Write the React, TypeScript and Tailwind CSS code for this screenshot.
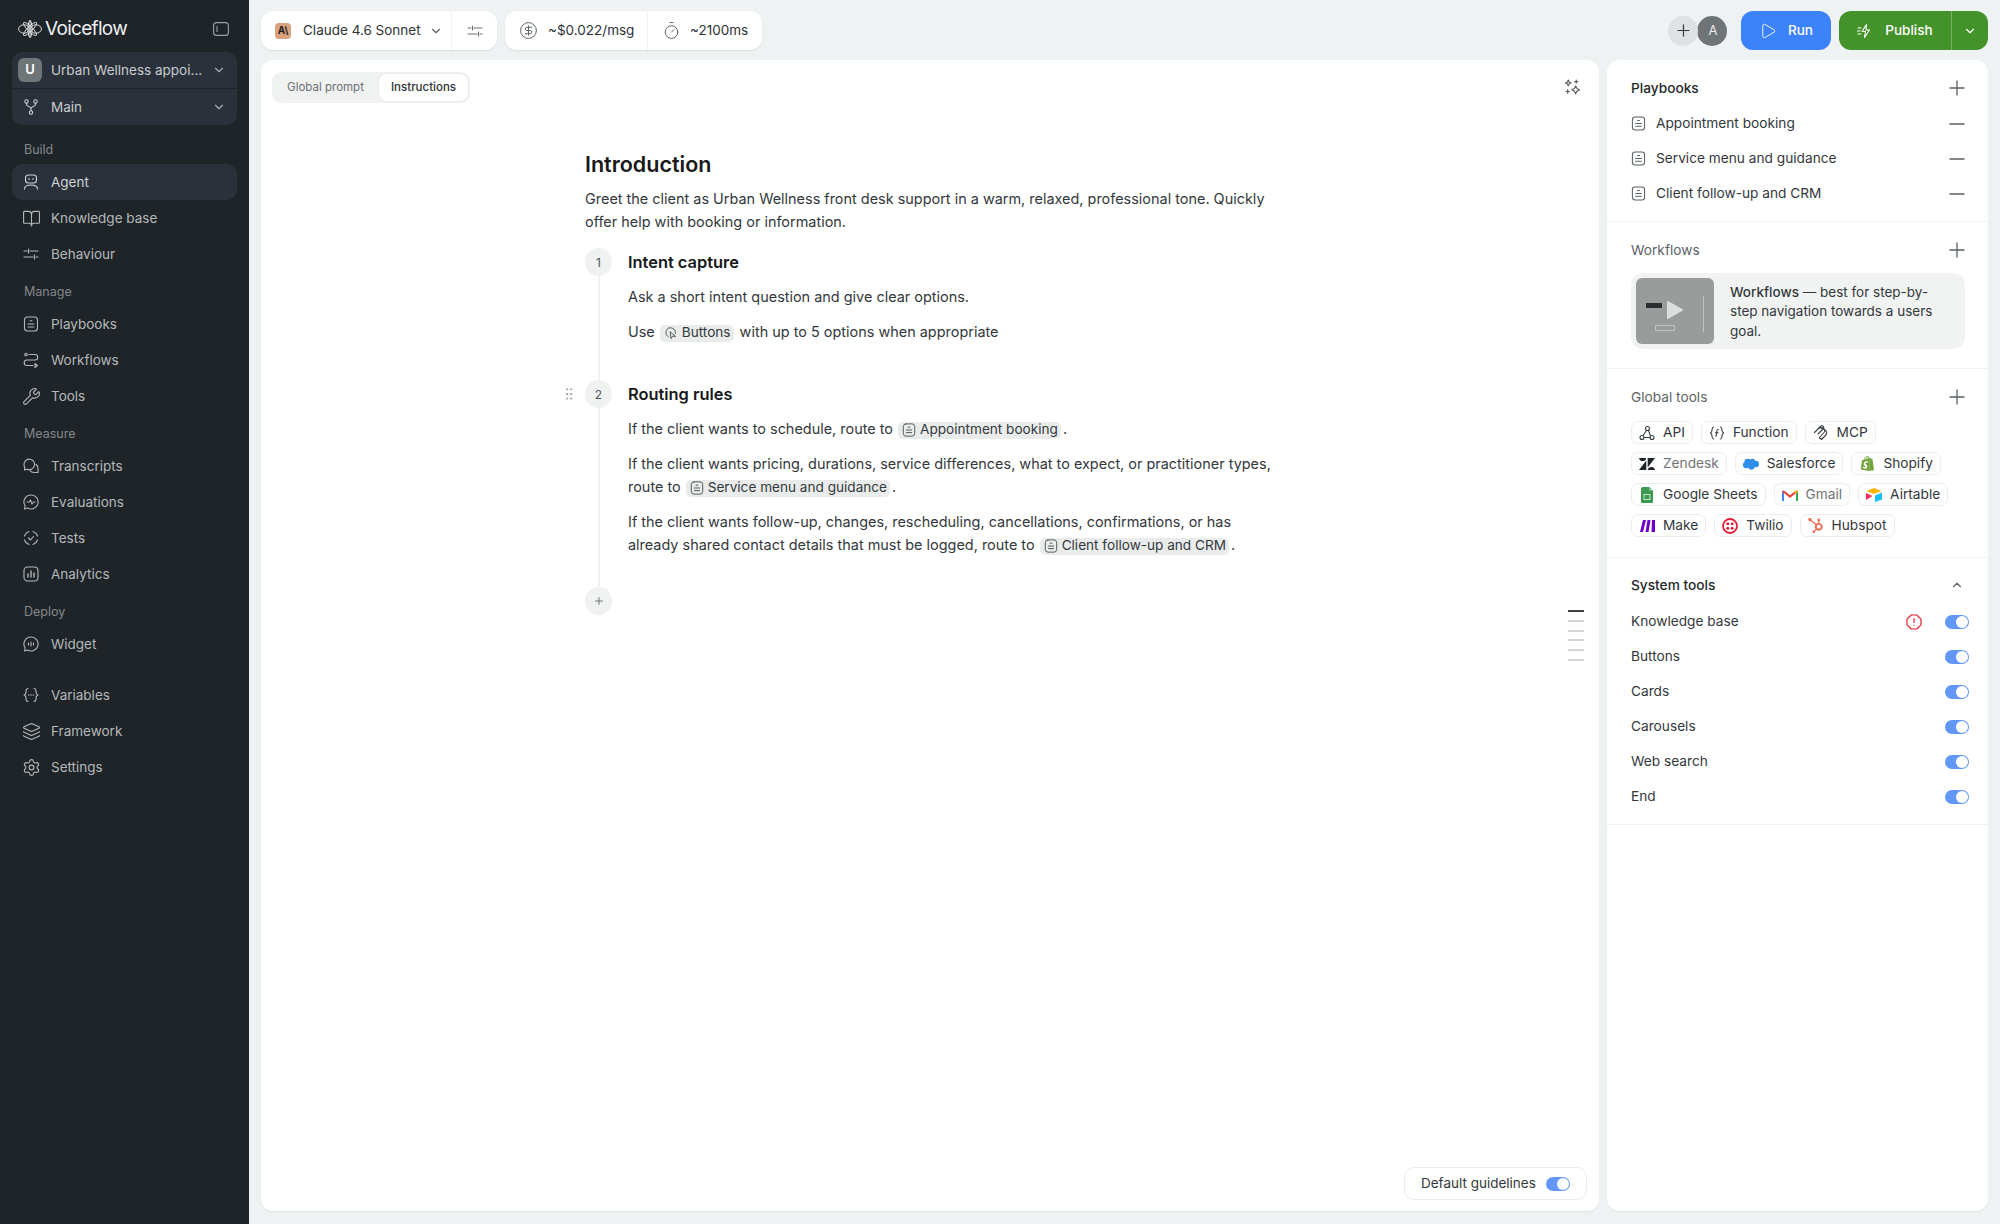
import type { ReactNode } from "react";
import {
  BookOpen,
  ChevronDown,
  ChevronUp,
  Minus,
  Plus,
  Play,
  Wrench,
  Settings,
  Layers,
  CircleDollarSign,
  Timer,
  GripVertical,
} from "lucide-react";
import { SiHubspot, SiShopify } from "react-icons/si";

function Svg({ children, size = 16, className = "" }: { children: ReactNode; size?: number; className?: string }) {
  return (
    <svg width={size} height={size} viewBox="0 0 16 16" fill="none" stroke="currentColor" strokeWidth="1.1" strokeLinecap="round" strokeLinejoin="round" className={`shrink-0 ${className}`}>
      {children}
    </svg>
  );
}

function PlaybookIcon({ size = 16, className = "" }: { size?: number; className?: string }) {
  return (
    <Svg size={size} className={className}>
      <rect x="1.5" y="1" width="13" height="14" rx="3" />
      <path d="M7 4.800h2M5 8h6M5 11h6" />
    </Svg>
  );
}

function SlidersIcon({ size = 16 }: { size?: number }) {
  return (
    <Svg size={size}>
      <path d="M1 5h3M7 5h8M5.500 3v4M1 11h9M13 11h2M11.500 9v4" />
    </Svg>
  );
}

const navIcons: Record<string, ReactNode> = {
  Agent: (
    <Svg>
      <rect x="2.500" y="1" width="11" height="8" rx="3" />
      <path d="M6 4.500v1M10 4.500v1M1.500 15c0-2.800 2.500-4 6.500-4s6.500 1.200 6.500 4" />
    </Svg>
  ),
  "Knowledge base": <BookOpen size={19} strokeWidth={1.4} className="shrink-0" />,
  Behaviour: <SlidersIcon />,
  Playbooks: <PlaybookIcon />,
  Workflows: (
    <Svg>
      <circle cx="3" cy="2.500" r="1.300" />
      <path d="M6 2.500h6a2.700 2.700 0 0 1 0 5.500H4a2.700 2.700 0 0 0 0 5.500h6" />
      <path d="M12 11.500l2.500 2-2.500 2z" />
    </Svg>
  ),
  Tools: <Wrench size={19} strokeWidth={1.4} className="shrink-0" />,
  Transcripts: (
    <Svg>
      <path d="M1 6.500a5.300 5.300 0 1 1 3 4.700L1.500 12 1.800 9.500A5 5 0 0 1 1 6.500z" />
      <path d="M13 6.500c1.500 1 2 2.500 2 4v4h-4c-1.500 0-3-.5-4-2" />
    </Svg>
  ),
  Evaluations: (
    <Svg>
      <path d="M8 1a7 7 0 1 1-3.500 13L1.500 15l.7-3A7 7 0 0 1 8 1z" />
      <path d="M4 8h2l1.500-2 1.500 4L10.500 8H12" />
    </Svg>
  ),
  Tests: (
    <Svg>
      <path d="M1.500 6A7 7 0 0 1 6 1.500M10 1.500A7 7 0 0 1 14.500 6M14.500 10A7 7 0 0 1 10 14.500M6 14.500A7 7 0 0 1 1.500 10" />
      <path d="M5.500 8l2 2 3-3.500" />
    </Svg>
  ),
  Analytics: (
    <Svg>
      <rect x="1" y="1" width="14" height="14" rx="3.500" />
      <path d="M5 8v3M8 5v6M11 7v4" strokeWidth="1.400" />
    </Svg>
  ),
  Widget: (
    <Svg>
      <path d="M8 1a7 7 0 1 1-3.500 13L1.500 15l.7-3A7 7 0 0 1 8 1z" />
      <path d="M5.500 7v2M8 6v4M10.500 7v2" />
    </Svg>
  ),
  Variables: (
    <Svg>
      <path d="M5 1.500C3 1.500 3 3 3 4.500S3 7.500 1 8c2 .5 2 2 2 3.500s0 3 2 3M11 1.500c2 0 2 1.500 2 3s0 3 2 3.500c-2 .5-2 2-2 3.500s0 3-2 3" />
      <path d="M5.700 8h.01M8 8h.01M10.300 8h.01" strokeWidth="1.500" />
    </Svg>
  ),
  Framework: <Layers size={19} strokeWidth={1.4} className="shrink-0" />,
  Settings: <Settings size={19} strokeWidth={1.4} className="shrink-0" />,
};

function NavRow({ label, active = false }: { label: string; active?: boolean }) {
  return (
    <div className={`flex h-9 items-center gap-3 rounded-[10px] pl-[11px] text-[13.5px] text-[#b4b8bb] ${active ? "bg-[#2b313a] text-[#d0d3d6]" : ""}`}>
      <span className="flex w-4 justify-center">{navIcons[label]}</span>
      {label}
    </div>
  );
}

function NavGroup({ title, items, active }: { title: string; items: string[]; active?: string }) {
  return (
    <div className="flex flex-col">
      <div className="mb-[6px] flex h-[18px] items-center pl-3 pt-[2px] text-[12.5px] text-[#83888c]">{title}</div>
      {items.map((item) => (
        <NavRow key={item} label={item} active={item === active} />
      ))}
    </div>
  );
}

function VoiceflowMark() {
  return (
    <svg width="24" height="18" viewBox="0 0 24 18" fill="none" stroke="#e8eaeb" strokeWidth="0.9" className="shrink-0">
      <ellipse cx="6" cy="9" rx="5.400" ry="4.200" />
      <ellipse cx="18" cy="9" rx="5.400" ry="4.200" />
      <ellipse cx="12" cy="9" rx="2" ry="8.500" />
      <ellipse cx="12" cy="9" rx="9" ry="2.400" transform="rotate(45 12 9)" />
      <ellipse cx="12" cy="9" rx="9" ry="2.400" transform="rotate(-45 12 9)" />
      <path d="M12 0v18" />
    </svg>
  );
}

function Sidebar() {
  return (
    <aside className="flex w-[249px] shrink-0 flex-col bg-[#1f2428] px-3">
      <div className="flex h-[52px] items-center justify-between pl-[6px] pr-2 pt-[6px]">
        <div className="flex items-center gap-[3px]">
          <VoiceflowMark />
          <span className="text-[19px] font-normal tracking-[-0.7px] text-[#eef0f1]">Voiceflow</span>
        </div>
        <svg width="16" height="14" viewBox="0 0 16 14" fill="none" stroke="#9ca0a3" strokeWidth="1.100">
          <rect x="0.600" y="0.600" width="14.800" height="12.800" rx="3" />
          <path d="M4 4v6" />
        </svg>
      </div>
      <div className="flex flex-col gap-px">
        <div className="flex h-9 items-center whitespace-nowrap rounded-t-[10px] bg-[#2b313a] pl-[6px] pr-[11px] text-[13.5px] text-[#c8cbce]">
          <span className="mr-[9px] flex h-6 w-6 items-center justify-center rounded-md bg-[#6f7477] text-[13px] font-semibold text-white">U</span>
          <span className="flex-1">Urban Wellness appoi...</span>
          <ChevronDown size={14} className="text-[#a8acaf]" />
        </div>
        <div className="flex h-9 items-center rounded-b-[10px] bg-[#2b313a] pl-[11px] pr-[11px] text-[13.5px] text-[#c8cbce]">
          <span className="mr-3 flex w-4 justify-center">
            <Svg size={16}>
              <circle cx="3.500" cy="2.500" r="1.700" />
              <circle cx="12.500" cy="2.500" r="1.700" />
              <circle cx="8" cy="13.500" r="1.700" />
              <path d="M3.500 4.200v1c0 2.500 4.500 2 4.500 4.500v2M12.500 4.200v1c0 2.500-4.500 2-4.500 4.500" />
            </Svg>
          </span>
          <span className="flex-1">Main</span>
          <ChevronDown size={14} className="text-[#a8acaf]" />
        </div>
      </div>
      <div className="mt-[15px] flex flex-col gap-[10px]">
        <NavGroup title="Build" items={["Agent", "Knowledge base", "Behaviour"]} active="Agent" />
        <NavGroup title="Manage" items={["Playbooks", "Workflows", "Tools"]} />
        <NavGroup title="Measure" items={["Transcripts", "Evaluations", "Tests", "Analytics"]} />
        <NavGroup title="Deploy" items={["Widget"]} />
      </div>
      <div className="mt-[15px] flex flex-col">
        <NavRow label="Variables" />
        <NavRow label="Framework" />
        <NavRow label="Settings" />
      </div>
    </aside>
  );
}

function TopBar() {
  return (
    <header className="flex h-[60px] items-center whitespace-nowrap pr-3 pt-[1px] text-[13.5px] text-[#2d3236]">
      <div className="flex h-[39px] items-stretch rounded-xl bg-white shadow-[0_1px_2px_rgba(0,0,0,0.08)]">
        <div className="flex w-[191px] items-center border-r border-[#eef0f1] pl-[14px]">
          <span className="mr-3 flex h-4 w-4 items-center justify-center rounded-[4px] bg-[#d9a27c] text-[10px] font-bold text-[#1f1f1f]">A\</span>
          <span>Claude 4.6 Sonnet</span>
          <ChevronDown size={14} className="ml-2 text-[#5a6064]" />
        </div>
        <div className="flex w-[45px] items-center justify-center text-[#6b7074]">
          <SlidersIcon />
        </div>
      </div>
      <div className="ml-2 flex h-[39px] items-stretch rounded-xl bg-white shadow-[0_1px_2px_rgba(0,0,0,0.08)]">
        <div className="flex w-[143px] items-center gap-[10px] border-r border-[#eef0f1] pl-[14px]">
          <CircleDollarSign size={19} strokeWidth={1.2} className="shrink-0 text-[#5a6064]" />
          <span>~$0.022/msg</span>
        </div>
        <div className="flex items-center gap-[9px] pl-[14px] pr-[14px]">
          <Timer size={19} strokeWidth={1.2} className="text-[#5a6064]" />
          <span>~2100ms</span>
        </div>
      </div>
      <div className="ml-auto flex items-center">
        <span className="z-10 flex h-[30px] w-[30px] items-center justify-center rounded-full bg-[#dfe1e2] text-[#33383b]">
          <Plus size={19} strokeWidth={1.500} />
        </span>
        <span className="-ml-px flex h-[30px] w-[30px] items-center justify-center rounded-full bg-[#6f7477] pl-[2px] text-[13px] text-[#e8eaeb]">A</span>
        <div className="ml-[14px] flex h-[39px] w-[90px] items-center justify-center gap-[11px] rounded-xl bg-[#3c82fb] font-medium text-white">
          <Play size={18} strokeWidth={1.200} />
          <span>Run</span>
        </div>
        <div className="ml-2 flex h-[39px] w-[149px] items-stretch rounded-xl bg-[#43922a] text-white">
          <div className="flex w-[113px] items-center justify-center gap-3 border-r border-[#7cb06a] font-medium">
            <Svg size={16}>
              <path d="M9.500 1.500L5 8.500h3.500l-1 6 5-7.500H9L9.500 1.500zM1 5h3M0.500 8h2.500M1 11h3" />
            </Svg>
            <span>Publish</span>
          </div>
          <div className="flex flex-1 items-center justify-center">
            <ChevronDown size={14} strokeWidth={2} />
          </div>
        </div>
      </div>
    </header>
  );
}

function Mention({ label, icon }: { label: string; icon?: ReactNode }) {
  return (
    <span className="ml-[5px] mr-[2px] inline-flex h-[17px] items-center gap-[4px] rounded-[5px] bg-[#eaecec] pl-[4px] pr-[3px] align-[-3px] text-[13.6px] leading-none text-[#33383c]">
      {icon ?? <PlaybookIcon size={14} className="text-[#50565a]" />}
      {label}
    </span>
  );
}

function ToggleOn() {
  return (
    <span className="flex h-[14px] w-6 shrink-0 items-center justify-end rounded-full bg-[#6297f8] pr-[1px]">
      <span className="h-3 w-3 rounded-full bg-white" />
    </span>
  );
}

function StepBadge({ text }: { text: ReactNode }) {
  return (
    <span className="flex h-7 w-[27px] shrink-0 items-center justify-center rounded-full bg-[#f0f1f1] text-[12px] text-[#50565a]">{text}</span>
  );
}

function Editor() {
  return (
    <section className="relative flex w-[1338px] flex-col rounded-xl bg-white shadow-[0_1px_2px_rgba(0,0,0,0.06)]">
      <div className="flex items-start justify-between pl-[11px] pr-[18px] pt-3">
        <div className="flex h-[31px] items-center rounded-[9px] bg-[#f0f1f1] pr-[2px] text-[11.5px]">
          <span className="w-[107px] text-center text-[#6c7175]">Global prompt</span>
          <span className="flex h-[27px] w-[89px] items-center justify-center rounded-[7px] bg-white font-medium text-[#2d3236] shadow-[0_0_1px_rgba(0,0,0,0.2)]">Instructions</span>
        </div>
        <Svg size={17} className="mt-[7px] text-[#5a6064]">
          <path d="M4 1l.8 1.900 1.900.8-1.900.8L4 6.500l-.8-2L1.300 3.700l1.900-.8zM11.500 1v3M10 2.500h3M3.500 10v3.500M1.800 11.800h3.400M11 6.500l1.200 2.500 2.500 1.200-2.500 1.200L11 14l-1.200-2.600-2.500-1.200 2.500-1.200z" />
        </Svg>
      </div>
      <div className="pl-[324px] pt-[46px] text-[14.45px] leading-[23px] text-[#33383c]">
        <h1 className="mb-2 text-[21.5px] font-semibold leading-[30px] text-[#17191b]">Introduction</h1>
        <p className="w-[690px]">Greet the client as Urban Wellness front desk support in a warm, relaxed, professional tone. Quickly offer help with booking or information.</p>
        <div className="relative mt-[15px] flex flex-col">
          <span className="absolute bottom-[26px] left-[13px] top-[24px] w-[2px] bg-[#f0f1f1]" />
          <div className="relative flex gap-4">
            <StepBadge text="1" />
            <div className="flex h-[132px] flex-col">
              <h2 className="text-[16.4px] font-semibold leading-7 text-[#17191b]">Intent capture</h2>
              <p className="mt-[9px]">Ask a short intent question and give clear options.</p>
              <p className="mt-3">
                Use
                <Mention
                  label="Buttons"
                  icon={
                    <Svg size={14} className="text-[#50565a]">
                      <path d="M5 12.500A5.500 5.500 0 1 1 13 8.500M7 7l1 7.500 1.800-3 3.200.5z" />
                    </Svg>
                  }
                />
                {" "}with up to 5 options when appropriate
              </p>
            </div>
          </div>
          <div className="relative flex gap-4">
            <StepBadge text="2" />
            <GripVertical size={16} strokeWidth={1.500} className="absolute -left-6 top-[6px] text-[#9da1a4]" />
            <div className="flex h-[207px] flex-col">
              <h2 className="text-[16.4px] font-semibold leading-7 text-[#17191b]">Routing rules</h2>
              <p className="mt-[9px]">
                If the client wants to schedule, route to
                <Mention label="Appointment booking" />.
              </p>
              <p className="mt-3 w-[648px]">
                If the client wants pricing, durations, service differences, what to expect, or practitioner types, route to
                <Mention label="Service menu and guidance" />.
              </p>
              <p className="mt-3 w-[648px]">
                If the client wants follow-up, changes, rescheduling, cancellations, confirmations, or has already shared contact details that must be logged, route to
                <Mention label="Client follow-up and CRM" />.
              </p>
            </div>
          </div>
          <div className="relative">
            <StepBadge text={<Plus size={12} strokeWidth={1.500} />} />
          </div>
        </div>
      </div>
      {/* minimap */}
      <div className="absolute left-[1307px] top-[550px] flex w-4 flex-col gap-[7.8px]">
        <span className="h-[2px] bg-[#3c4246]" />
        {[0, 1, 2, 3, 4].map((i) => (
          <span key={i} className="h-[2px] bg-[#d2d4d5]" />
        ))}
      </div>
      <div className="absolute bottom-[11px] right-3 flex h-[33px] w-[183px] items-center justify-between rounded-[10px] border border-[#eceeee] bg-white px-4 text-[13.5px] text-[#33383c]">
        Default guidelines
        <ToggleOn />
      </div>
    </section>
  );
}

function SectionHead({ title, strong = false, right }: { title: string; strong?: boolean; right?: ReactNode }) {
  return (
    <div className="flex h-5 items-center justify-between">
      <span className={strong ? "font-medium text-[#24282b]" : "text-[#5d6266]"}>{title}</span>
      <span className="flex w-[14px] justify-center text-[#5a6064]">{right ?? <Plus size={24} strokeWidth={1.300} className="shrink-0" />}</span>
    </div>
  );
}

type Tool = { name: string; icon: ReactNode; muted?: boolean };

const tools: Tool[][] = [
  [
    {
      name: "API",
      icon: (
        <Svg className="text-[#3a3f43]">
          <circle cx="8.500" cy="3.500" r="2" />
          <circle cx="3" cy="12.500" r="2" />
          <circle cx="13" cy="12.500" r="2" />
          <path d="M7.500 5.500L4 10.500M9.500 5.500L11.500 11M5 12.500h6" />
        </Svg>
      ),
    },
    {
      name: "Function",
      icon: (
        <Svg className="text-[#3a3f43]">
          <path d="M4.500 2C3 2.500 3 3.500 3 5s0 2-1.500 3C3 9 3 9.500 3 11s0 2.500 1.500 3M11.500 2C13 2.500 13 3.500 13 5s0 2 1.500 3C13 9 13 9.500 13 11s0 2.500-1.500 3" />
          <path d="M9.500 4.500C8.500 4.300 8 5 7.800 6.500L7 11.500M6.500 7.800h2.700" />
        </Svg>
      ),
    },
    {
      name: "MCP",
      icon: (
        <Svg className="text-[#3a3f43]">
          <path d="M1.500 7.500L8 1c1.500-1 3.500 1 2.500 2.500L5 9M6 3.500c2-1.500 3-1.200 4.500 0s1.700 2.500.5 4L7 12c-1 1 0 2 1 1.500M9 3.800c2 0 4 1.700 4.500 3.200s0 2.500-1 3.500L8.500 14.500" />
        </Svg>
      ),
    },
  ],
  [
    {
      name: "Zendesk",
      muted: true,
      icon: (
        <svg width="16" height="12" viewBox="0 0 16 12" fill="#1f2428">
          <path d="M7.300 2.500V12H0zM7.300 0a3.700 3.700 0 0 1-7.300 0zM8.700 12a3.700 3.700 0 0 1 7.300 0zM8.700 9.500V0H16z" />
        </svg>
      ),
    },
    {
      name: "Salesforce",
      icon: (
        <svg width="17" height="12" viewBox="0 0 17 12" fill="#2f8fe8">
          <circle cx="5" cy="4" r="3.500" />
          <circle cx="10" cy="3.500" r="3" />
          <circle cx="13.500" cy="6" r="3.500" />
          <circle cx="9" cy="8.500" r="3.500" />
          <circle cx="3.500" cy="7" r="3.500" />
        </svg>
      ),
    },
    { name: "Shopify", icon: <SiShopify size={15} className="text-[#73a43c]" /> },
  ],
  [
    {
      name: "Google Sheets",
      icon: (
        <svg width="12" height="16" viewBox="0 0 12 16">
          <path d="M1.500 0H8l4 4v10.500a1.500 1.500 0 0 1-1.500 1.500h-9A1.500 1.500 0 0 1 0 14.500v-13A1.500 1.500 0 0 1 1.500 0z" fill="#3b9a50" />
          <path d="M8 0l4 4H8z" fill="#7fc08c" />
          <rect x="3" y="7.500" width="6" height="5" fill="none" stroke="#c6e3cc" strokeWidth="1" />
        </svg>
      ),
    },
    {
      name: "Gmail",
      muted: true,
      icon: (
        <svg width="16" height="12" viewBox="0 0 16 12" fill="none">
          <path d="M1 12V2" stroke="#4285f4" strokeWidth="2" />
          <path d="M15 12V2" stroke="#34a853" strokeWidth="2" />
          <path d="M1 2l7 5.500L15 2" stroke="#ea4335" strokeWidth="2.200" />
          <path d="M15 2l-2 1.500" stroke="#fbbc04" strokeWidth="2.200" />
        </svg>
      ),
    },
    {
      name: "Airtable",
      icon: (
        <svg width="16" height="14" viewBox="0 0 16 14">
          <path d="M8 0l7.500 3L8 6 .5 3z" fill="#fcb400" />
          <path d="M9 7.500L16 4.500v7L9 14z" fill="#18bfff" />
          <path d="M0 5l6.500 3L0 12z" fill="#f82b60" />
        </svg>
      ),
    },
  ],
  [
    {
      name: "Make",
      icon: (
        <svg width="15" height="12" viewBox="0 0 15 12" fill="#6d00cc">
          <path d="M3 0h3L3 12H0zM7.500 0h3L8.500 12h-3zM12 0h3v12h-3.500z" />
        </svg>
      ),
    },
    {
      name: "Twilio",
      icon: (
        <svg width="16" height="16" viewBox="0 0 16 16" fill="#e31e3a">
          <circle cx="8" cy="8" r="7" fill="none" stroke="#e31e3a" strokeWidth="1.800" />
          <circle cx="5.800" cy="5.800" r="1.500" />
          <circle cx="10.200" cy="5.800" r="1.500" />
          <circle cx="5.800" cy="10.200" r="1.500" />
          <circle cx="10.200" cy="10.200" r="1.500" />
        </svg>
      ),
    },
    { name: "Hubspot", icon: <SiHubspot size={15} className="text-[#ef6a4c]" /> },
  ],
];

function ToolChip({ tool }: { tool: Tool }) {
  return (
    <span className={`flex h-[23px] items-center gap-2 rounded-[7px] border border-[#eceeee] pl-[7px] pr-[7px] ${tool.muted ? "text-[#6f7478]" : "text-[#33383c]"}`}>
      <span className="flex w-4 justify-center">{tool.icon}</span>
      {tool.name}
    </span>
  );
}

const systemTools = ["Knowledge base", "Buttons", "Cards", "Carousels", "Web search", "End"];

function RightPanel() {
  return (
    <aside className="flex w-[381px] flex-col rounded-xl bg-white text-[13.7px] shadow-[0_1px_2px_rgba(0,0,0,0.06)]">
      <div className="flex flex-col border-b border-[#f0f1f1] pb-[10px] pl-6 pr-6 pt-[18px]">
        <SectionHead title="Playbooks" strong />
        <div className="mt-[8px] flex flex-col">
          {["Appointment booking", "Service menu and guidance", "Client follow-up and CRM"].map((p) => (
            <div key={p} className="flex h-[35px] items-center gap-[10px] text-[#33383c]">
              <PlaybookIcon size={15} className="text-[#5a6064]" />
              <span className="flex-1">{p}</span>
              <Minus size={24} strokeWidth={1.300} className="-mr-[5px] shrink-0 text-[#5a6064]" />
            </div>
          ))}
        </div>
      </div>
      <div className="flex flex-col border-b border-[#f0f1f1] pb-[19px] pl-6 pr-6 pt-[18px]">
        <SectionHead title="Workflows" />
        <div className="mt-[13px] flex h-[76px] w-[334px] items-center gap-4 rounded-xl bg-[#f1f3f3] pl-[5px] pr-4">
          <div className="relative h-[66px] w-[78px] shrink-0 overflow-hidden rounded-md bg-[#9a9c9c]">
            <span className="absolute left-[10px] top-[25px] h-[5px] w-4 bg-[#2b2e30]" />
            <span className="absolute left-[19px] top-[47px] h-[6px] w-5 border border-[#bfc1c1]" />
            <span className="absolute right-[1px] top-[18px] h-[36px] w-[10px] border-l border-[#bfc1c1]" />
            <svg width="18" height="20" viewBox="0 0 18 20" className="absolute left-[30px] top-[22px]">
              <path d="M2 2l14 8-14 8z" fill="#dcdddd" stroke="#dcdddd" strokeWidth="2" strokeLinejoin="round" />
            </svg>
          </div>
          <p className="pt-[2px] text-[13.5px] leading-[19.500px] text-[#33383c]">
            <span className="font-medium">Workflows</span> — best for step-by-step navigation towards a users goal.
          </p>
        </div>
      </div>
      <div className="flex flex-col border-b border-[#f0f1f1] pb-[20px] pl-6 pr-6 pt-[18px]">
        <SectionHead title="Global tools" />
        <div className="mt-[14px] flex flex-col gap-2">
          {tools.map((row, i) => (
            <div key={i} className="flex gap-2">
              {row.map((t) => (
                <ToolChip key={t.name} tool={t} />
              ))}
            </div>
          ))}
        </div>
      </div>
      <div className="flex flex-col border-b border-[#f0f1f1] pb-[10px] pl-6 pr-[19px] pt-[17px]">
        <div className="flex h-5 items-center justify-between pr-[5px]">
          <span className="font-medium text-[#24282b]">System tools</span>
          <ChevronUp size={14} className="text-[#5a6064]" />
        </div>
        <div className="mt-[9px] flex flex-col">
          {systemTools.map((s) => (
            <div key={s} className="flex h-[35px] items-center text-[#33383c]">
              <span className="flex-1">{s}</span>
              {s === "Knowledge base" && (
                <svg width="16" height="16" viewBox="0 0 16 16" fill="none" stroke="#e2202c" strokeWidth="1.200" className="mr-[23px]" strokeLinecap="round" strokeLinejoin="round">
                  <path d="M5.200 1h5.600L15 5.200v5.600L10.800 15H5.200L1 10.800V5.200z" />
                  <path d="M8 4.500v4M8 11.200h.01" />
                </svg>
              )}
              <ToggleOn />
            </div>
          ))}
        </div>
      </div>
    </aside>
  );
}

export default function App() {
  return (
    <div className="flex h-[1224px] w-[2000px] overflow-hidden bg-[#eef2f3] font-['Inter',sans-serif]">
      <Sidebar />
      <main className="flex flex-1 flex-col pl-3">
        <TopBar />
        <div className="flex h-[1151px] gap-2">
          <Editor />
          <RightPanel />
        </div>
      </main>
    </div>
  );
}
